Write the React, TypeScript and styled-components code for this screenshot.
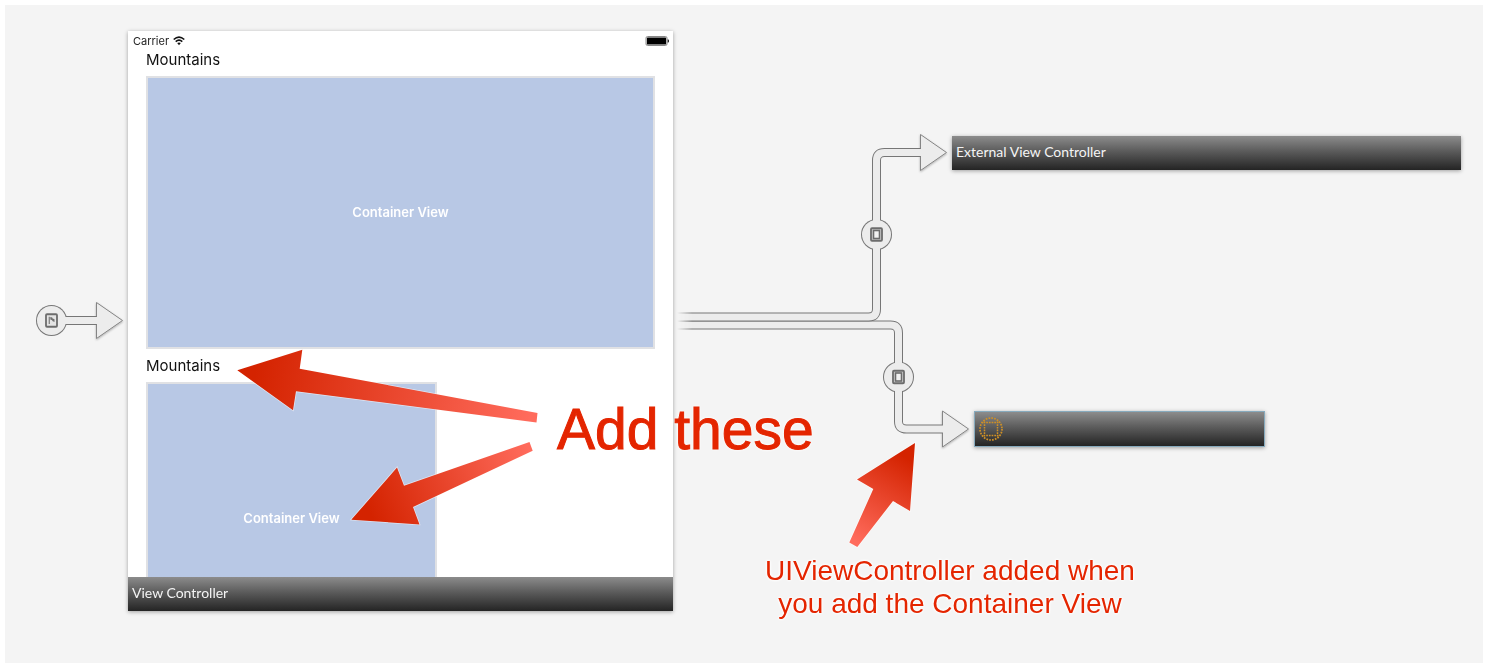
import React from "react";
import styled, { createGlobalStyle, css } from "styled-components";

const GlobalStyle = createGlobalStyle`
  * { box-sizing: border-box; }
  body {
    margin: 0;
    padding: 5px;
    background: #ffffff;
    font-family: Inter, "Liberation Sans", sans-serif;
  }
`;

const Canvas = styled.main`
  position: relative;
  min-height: calc(100vh - 10px);
  background: #f4f4f4;
  overflow: hidden;
`;

const Layer = styled.svg`
  position: absolute;
  left: 0;
  top: 0;
  width: 1478px;
  height: 658px;
  pointer-events: none;
`;

const Node = styled.section<{ $x: number; $y: number; $width: number }>`
  position: absolute;
  left: ${(p) => p.$x}px;
  top: ${(p) => p.$y}px;
  width: ${(p) => p.$width}px;
  background: #ffffff;
  box-shadow: 0 1px 4px rgba(0, 0, 0, 0.35);
`;

const Screen = styled.div`
  height: 546px;
  overflow: hidden;
`;

const StatusBar = styled.div`
  display: flex;
  align-items: center;
  height: 18px;
  padding: 2px 4px 0 5px;
  gap: 4px;
  font-size: 11px;
  line-height: 16px;
  color: #222222;
`;

const BatteryIcon = styled.svg`
  margin-left: auto;
`;

const Content = styled.div`
  display: flex;
  flex-direction: column;
  align-items: flex-start;
  gap: 6px;
  padding: 0 18px;
`;

const Label = styled.h2`
  margin: 0;
  font-size: 15px;
  font-weight: 400;
  line-height: 21px;
  color: #111111;
`;

const ContainerView = styled.div<{ $width: string }>`
  display: flex;
  align-items: center;
  justify-content: center;
  width: ${(p) => p.$width};
  height: 273px;
  padding-bottom: 2px;
  border: 2px solid #e0e1e4;
  background: #b8c8e5;
  color: #ffffff;
  font-size: 13px;
  font-weight: 600;
  line-height: 16px;
`;

const TitleBar = styled.header<{ $selected?: boolean }>`
  display: flex;
  align-items: center;
  height: 34px;
  padding: 0 4px 2px;
  background: linear-gradient(#8c8c8c, #5b5b5b 45%, #242424);
  color: #f4f4f4;
  font-family: Lato, sans-serif;
  font-size: 14px;
  line-height: 18px;
  ${(p) =>
    p.$selected &&
    css`
      height: 36px;
      padding: 0 3px;
      border: 1px solid #87aabd;
    `}
`;

const Note = styled.p<{ $x: number; $y: number; $large?: boolean }>`
  position: absolute;
  left: ${(p) => p.$x}px;
  top: ${(p) => p.$y}px;
  margin: 0;
  font-family: "Liberation Sans", sans-serif;
  font-size: 28px;
  line-height: 33px;
  text-align: center;
  white-space: nowrap;
  color: #e42500;
  text-shadow: 0 0 3px #ffffff, 0 0 3px #ffffff, 0 0 2px #ffffff;
  ${(p) =>
    p.$large &&
    css`
      font-size: 57px;
      line-height: 66px;
      -webkit-text-stroke: 1px #e42500;
    `}
`;

function Wifi() {
  return (
    <svg width="12" height="10" viewBox="0 0 12 10" fill="none" stroke="#111" strokeWidth="1.6" aria-hidden="true">
      <path d="M.7 3.5Q6-1.3 11.3 3.5" />
      <path d="M2.7 5.6Q6 2.7 9.3 5.6" />
      <path d="M4.2 7.1Q6 5.7 7.8 7.1L6 9.2Z" fill="#111" stroke="none" />
    </svg>
  );
}

function Battery() {
  return (
    <BatteryIcon width="24" height="10" viewBox="0 0 24 10" aria-hidden="true">
      <rect x="1" y=".5" width="21" height="9" rx="1.5" fill="#fff" stroke="#888" />
      <rect x="1.9" y="1.4" width="19.2" height="7.2" rx=".6" fill="#000" />
      <path d="M22.7 3.2q1.3.3 1.3 1.8t-1.3 1.8z" fill="#111" />
    </BatteryIcon>
  );
}

type ConnectorProps = {
  path: string;
  cx: number;
  cy: number;
  tipX: number;
  tipY: number;
  flag?: boolean;
};

function Connector({ path, cx, cy, tipX, tipY, flag }: ConnectorProps) {
  return (
    <g>
      <path
        d={`M${tipX - 26} ${tipY - 18}L${tipX} ${tipY}L${tipX - 26} ${tipY + 18}Z`}
        fill="#ececec"
        stroke="#858585"
        filter="url(#soft)"
      />
      <path d={path} fill="none" stroke="#767676" strokeWidth="9" />
      <circle cx={cx} cy={cy} r="15.5" fill="#767676" />
      <circle cx={cx} cy={cy} r="14.5" fill="#ececec" />
      <path d={path + "h1.5"} fill="none" stroke="#ececec" strokeWidth="7" />
      <rect
        x={cx - 5.5}
        y={cy - 6.25}
        width="11"
        height="12.5"
        rx="1"
        fill={flag ? "#e4e4e4" : "#d6d6d6"}
        stroke="#6c6c6c"
        strokeWidth="1.8"
      />
      {flag ? (
        <path
          d={`M${cx - 2.8} ${cy + 3.6}V${cy - 3.8}h1.1V${cy + 3.6}zM${cx - 1.2} ${cy - 3.6}l2 .6v.8l2.2 .9V${cy + 1.4}l-2.2-.9v-.8l-2-.6z`}
          fill="#707070"
        />
      ) : (
        <rect x={cx - 3} y={cy - 4} width="6" height="8" fill="#f2f2f2" stroke="#6c6c6c" strokeWidth="1.6" />
      )}
    </g>
  );
}

function Segues() {
  return (
    <Layer viewBox="5 5 1478 658" aria-hidden="true">
      <defs>
        <filter id="soft" x="-30%" y="-30%" width="160%" height="160%">
          <feDropShadow dx="0" dy="1" stdDeviation="1.2" floodOpacity=".3" />
        </filter>
        <linearGradient id="fade" gradientUnits="userSpaceOnUse" x1="677" y1="0" x2="692" y2="0">
          <stop offset="0" stopColor="#000" />
          <stop offset="1" stopColor="#fff" />
        </linearGradient>
        <mask id="fadeMask" maskUnits="userSpaceOnUse" x="670" y="100" width="400" height="400">
          <rect x="670" y="100" width="400" height="400" fill="url(#fade)" />
        </mask>
      </defs>
      <Connector path="M51.5 320.5H96.5" cx={51.5} cy={320.5} tipX={122.5} tipY={320.5} flag />
      <g mask="url(#fadeMask)">
        <Connector
          path="M677 325H890.5Q898.5 325 898.5 333V421.5Q898.5 429 906.5 429H942.5"
          cx={898.5}
          cy={377}
          tipX={968.5}
          tipY={429}
        />
        <Connector
          path="M677 317H868.5Q876.5 317 876.5 309V160.5Q876.5 152.5 884.5 152.5H920.5"
          cx={876.5}
          cy={234.5}
          tipX={946.5}
          tipY={152.5}
        />
      </g>
    </Layer>
  );
}

function SelectionIcon() {
  return (
    <svg width="26" height="26" viewBox="0 0 26 26" fill="none" stroke="#cf9026" aria-hidden="true">
      <circle cx="13" cy="13" r="11" strokeWidth="1.7" strokeDasharray="1.7 1.18" />
      <path d="M5.5 6.5h15M5.5 19.5h15M6.5 5.5v15M19.5 5.5v15" strokeWidth="1.5" strokeDasharray="1.7 1" />
    </svg>
  );
}

const pointers = [
  {
    id: "label",
    points: "237.3,370.3 302.3,349.7 299.7,368.7 537.5,413 536.5,422.5 296,391.3 293,410.3",
    from: [255, 373],
    to: [530, 418],
  },
  {
    id: "container",
    points: "351.3,519.7 397,467.5 404,485.7 529.5,442 532.7,450.7 413,507 419.5,524.5",
    from: [370, 512],
    to: [528, 447],
  },
  {
    id: "controller",
    points: "915,443 857,479.5 873.3,489 849.3,542.5 857.3,547 893,501 910,511",
    from: [906, 458],
    to: [855, 541],
  },
];

function Pointers() {
  return (
    <Layer viewBox="5 5 1478 658" aria-hidden="true">
      {pointers.map(({ id, points, from, to }) => (
        <g key={id}>
          <linearGradient id={id} gradientUnits="userSpaceOnUse" x1={from[0]} y1={from[1]} x2={to[0]} y2={to[1]}>
            <stop offset="0" stopColor="#d42300" />
            <stop offset="1" stopColor="#ff6b5c" />
          </linearGradient>
          <polygon points={points} fill={`url(#${id})`} stroke="#fff" strokeOpacity=".55" strokeWidth="1.5" paintOrder="stroke" />
        </g>
      ))}
    </Layer>
  );
}

export default function App() {
  return (
    <>
      <GlobalStyle />
      <Canvas>
        <Segues />
        <Node $x={123} $y={26} $width={545}>
          <Screen>
            <StatusBar>
              <span>Carrier</span>
              <Wifi />
              <Battery />
            </StatusBar>
            <Content>
              <Label>Mountains</Label>
              <ContainerView $width="100%">Container View</ContainerView>
              <Label>Mountains</Label>
              <ContainerView $width="291px">Container View</ContainerView>
            </Content>
          </Screen>
          <TitleBar>View Controller</TitleBar>
        </Node>
        <Node $x={947} $y={131} $width={509}>
          <TitleBar>External View Controller</TitleBar>
        </Node>
        <Node $x={969} $y={406} $width={291}>
          <TitleBar $selected>
            <SelectionIcon />
          </TitleBar>
        </Node>
        <Pointers />
        <Note $x={552} $y={391} $large>
          Add these
        </Note>
        <Note $x={760} $y={549}>
          UIViewController added when
          <br />
          you add the Container View
        </Note>
      </Canvas>
    </>
  );
}
